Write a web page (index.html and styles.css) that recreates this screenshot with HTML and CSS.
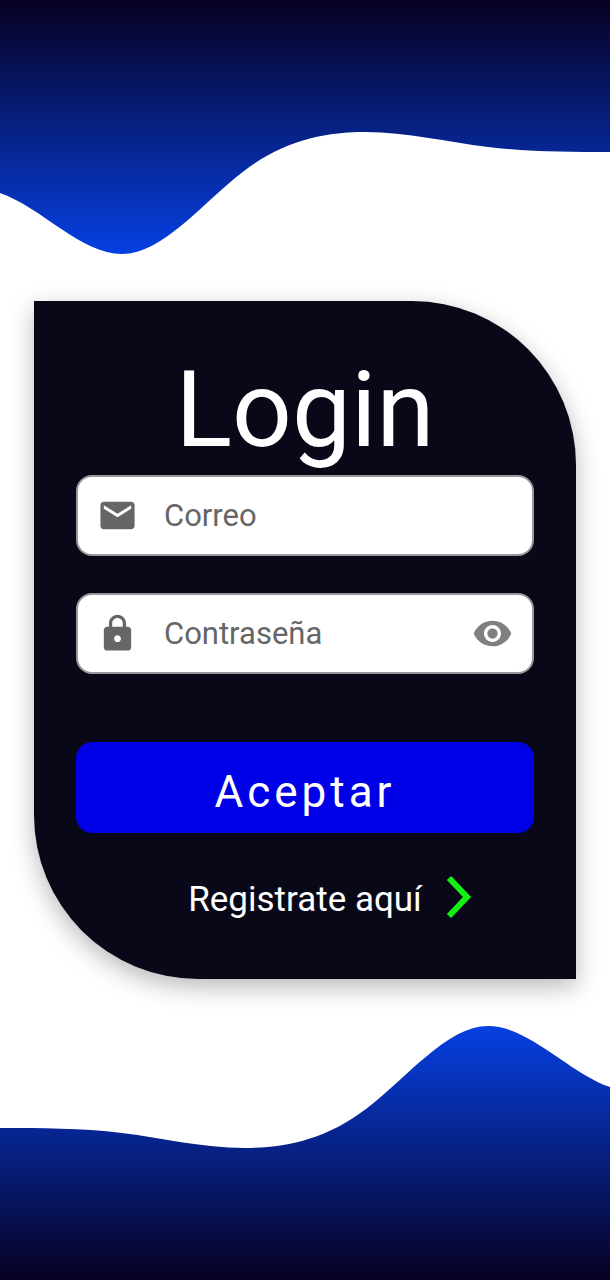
FILE: index.html
```html
<!DOCTYPE html>
<html lang="es">
<head>
  <meta charset="utf-8">
  <meta name="viewport" content="width=device-width, initial-scale=1">
  <title>Login</title>
  <link rel="stylesheet" href="styles.css">
</head>
<body>
  <div class="screen">
    <svg class="wave" viewBox="0 0 610 254" aria-hidden="true">
      <defs>
        <linearGradient id="night" x1="0" y1="0" x2="0" y2="1">
          <stop offset="0" stop-color="#070023"/>
          <stop offset="1" stop-color="#0640e2"/>
        </linearGradient>
      </defs>
      <path fill="url(#night)" d="M0 0V193C41 207 81 254 122 254C163 254 203 202 244 171C285 140 325 132 366 132C407 132 447 142 488 147C529 152 569 152 610 152V0Z"/>
    </svg>

    <main class="card">
      <h1 class="title">Login</h1>
      <form class="form">
        <div class="field">
          <label class="field-label" for="email" aria-label="Correo">
            <svg class="icon" viewBox="0 0 24 24" aria-hidden="true"><path d="M20 4H4c-1.1 0-1.99.9-1.99 2L2 18c0 1.1.9 2 2 2h16c1.1 0 2-.9 2-2V6c0-1.100-.9-2-2-2zm0 4l-8 5-8-5V6l8 5 8-5v2z"/></svg>
          </label>
          <input class="input" id="email" type="email" placeholder="Correo">
        </div>
        <div class="field">
          <label class="field-label" for="password" aria-label="Contraseña">
            <svg class="icon" viewBox="0 0 24 24" aria-hidden="true"><path d="M18 8h-1V6c0-2.760-2.240-5-5-5S7 3.240 7 6v2H6c-1.100 0-2 .9-2 2v10c0 1.100.9 2 2 2h12c1.100 0 2-.9 2-2V10c0-1.100-.9-2-2-2zm-6 9c-1.100 0-2-.9-2-2s.9-2 2-2 2 .9 2 2-.9 2-2 2zm3.100-9H8.900V6c0-1.710 1.390-3.100 3.100-3.100 1.710 0 3.100 1.390 3.100 3.100v2z"/></svg>
          </label>
          <input class="input" id="password" type="password" placeholder="Contraseña">
          <button class="reveal" type="button" aria-label="Mostrar contraseña">
            <svg class="icon" viewBox="0 0 24 24" aria-hidden="true"><path d="M12 4.500C7 4.500 2.730 7.610 1 12c1.730 4.390 6 7.500 11 7.500s9.270-3.110 11-7.500c-1.730-4.390-6-7.500-11-7.500zM12 17c-2.760 0-5-2.240-5-5s2.240-5 5-5 5 2.240 5 5-2.240 5-5 5zm0-8c-1.660 0-3 1.340-3 3s1.340 3 3 3 3-1.340 3-3-1.340-3-3-3z"/></svg>
          </button>
        </div>
        <button class="submit" type="submit">Aceptar</button>
      </form>
      <a class="register" href="#registro">
        <span class="register-text">Registrate aquí</span>
        <svg class="chevron" viewBox="0 0 26 44" aria-hidden="true"><path d="M3 3L21 22L3 41"/></svg>
      </a>
    </main>

    <svg class="wave wave-bottom" viewBox="0 0 610 254" aria-hidden="true">
      <path fill="url(#night)" d="M0 0V193C41 207 81 254 122 254C163 254 203 202 244 171C285 140 325 132 366 132C407 132 447 142 488 147C529 152 569 152 610 152V0Z"/>
    </svg>
  </div>
</body>
</html>
```
FILE: styles.css
```css
* {
  box-sizing: border-box;
}

body {
  margin: 0;
  background: #fff;
  font-family: Roboto, "Noto Sans", sans-serif;
}

.screen {
  display: flex;
  flex-direction: column;
  justify-content: space-between;
  min-height: 100vh;
}

.wave {
  display: block;
  width: 100%;
}

.wave-bottom {
  transform: rotate(180deg);
}

.card {
  margin: 0 34px;
  padding: 46px 42px 54px;
  background: #090818;
  border-radius: 0 164px 0 164px;
  box-shadow: 0 8px 24px rgba(0, 0, 0, 0.28);
  color: #fff;
}

.title {
  margin: 0;
  font-size: 105px;
  font-weight: 400;
  line-height: 128px;
  text-align: center;
}

.form {
  display: flex;
  flex-direction: column;
  gap: 37px;
}

.field {
  display: flex;
  align-items: center;
  height: 81px;
  padding: 0 19px;
  background: #fff;
  border: 2px solid #98989c;
  border-radius: 16px;
}

.field-label {
  display: flex;
  color: #666;
}

.icon {
  width: 41px;
  height: 41px;
  fill: currentColor;
}

.input {
  flex: 1;
  min-width: 0;
  height: 100%;
  padding: 0 0 0 26px;
  border: 0;
  outline: 0;
  background: none;
  color: #222;
  font: inherit;
  font-size: 31px;
}

.input::placeholder {
  color: #666;
  opacity: 1;
}

.reveal {
  display: flex;
  padding: 0;
  border: 0;
  background: none;
  color: #808080;
}

.submit {
  height: 91px;
  margin-top: 31px;
  padding: 8px 0 0;
  border: 0;
  border-radius: 16px;
  background: #0000e6;
  color: #fff;
  font: inherit;
  font-size: 44px;
  letter-spacing: 4px;
}

.register {
  display: grid;
  grid-template-columns: 1fr auto 1fr;
  align-items: start;
  margin-top: 42px;
  color: #fff;
  font-size: 35px;
  line-height: 50px;
  text-decoration: none;
}

.register-text {
  grid-column: 2;
}

.chevron {
  width: 26px;
  height: 44px;
  margin-left: 24px;
  fill: none;
  stroke: #14f014;
  stroke-width: 6;
}
```
